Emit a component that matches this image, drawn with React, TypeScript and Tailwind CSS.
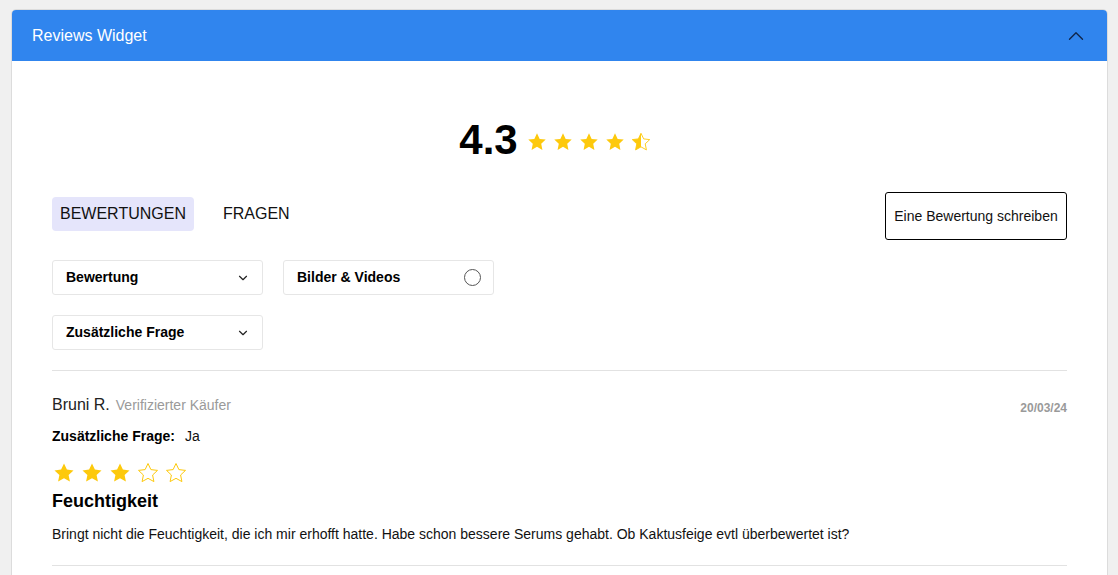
import { ChevronDown, ChevronUp } from "lucide-react";

const STAR =
  "M12 2.5l2.9 6.1 6.6.8-4.9 4.6 1.3 6.6L12 17.3l-5.9 3.3 1.3-6.6-4.9-4.6 6.6-.8z";

function Star({ fill, size }: { fill: "full" | "half" | "empty"; size: number }) {
  const id = `half-${size}`;
  return (
    <svg width={size} height={size} viewBox="0 0 24 24">
      {fill === "half" && (
        <defs>
          <linearGradient id={id}>
            <stop offset="50%" stopColor="#fdc90c" />
            <stop offset="50%" stopColor="#ffffff" />
          </linearGradient>
        </defs>
      )}
      <path
        d={STAR}
        fill={fill === "full" ? "#fdc90c" : fill === "half" ? `url(#${id})` : "none"}
        stroke="#fdc90c"
        strokeWidth={fill === "full" ? 0 : 1}
        strokeLinejoin="round"
      />
    </svg>
  );
}

function Select({ label, icon }: { label: string; icon: "chevron" | "radio" }) {
  return (
    <div className="flex h-[35px] w-[211px] items-center justify-between rounded-[3px] border border-[#e6e6e6] bg-white pl-[13px] pr-[12px]">
      <span className="text-[14px] font-bold text-black">{label}</span>
      {icon === "chevron" ? (
        <ChevronDown size={14} strokeWidth={2} className="text-[#222]" />
      ) : (
        <span className="h-[17px] w-[17px] rounded-full border border-[#555]" />
      )}
    </div>
  );
}

export default function App() {
  return (
    <div
      className="h-[575px] overflow-hidden bg-[#f0f0f0] pl-[11px] pr-[10px] pt-[9px]"
      style={{ fontFamily: '"Liberation Sans", Arial, sans-serif' }}
    >
      <div className="h-[600px] rounded-t-[5px] border border-[#dcdcdc] bg-white">
        <div className="flex h-[51px] items-center justify-between rounded-t-[4px] bg-[#3085ee] pl-[20px] pr-[18px]">
          <span className="text-[16px] text-white">Reviews Widget</span>
          <ChevronUp size={26} strokeWidth={1.25} className="text-[#10264a]" />
        </div>

        <div className="px-[40px]">
          <div className="flex items-center justify-center gap-[8px] pr-[8px] pt-[58px]">
            <span className="text-[42px] font-bold leading-none text-black">4.3</span>
            <div className="flex gap-[4px] pt-[4px]">
              <Star fill="full" size={22} />
              <Star fill="full" size={22} />
              <Star fill="full" size={22} />
              <Star fill="full" size={22} />
              <Star fill="half" size={22} />
            </div>
          </div>

          <div className="mt-[31px] flex items-center justify-between">
            <div className="mb-[4px] flex items-center gap-[20px]">
              <span className="rounded-[4px] bg-[#e5e5fb] px-[8px] py-[5px] text-[16px] text-[#111]">
                BEWERTUNGEN
              </span>
              <span className="px-[9px] py-[5px] text-[16px] text-[#111]">FRAGEN</span>
            </div>
            <button className="flex h-[48px] w-[182px] items-center justify-center rounded-[3px] border border-black bg-white text-[14px] text-[#111]">
              Eine Bewertung schreiben
            </button>
          </div>

          <div className="mt-[20px] flex flex-col gap-[20px]">
            <div className="flex gap-[20px]">
              <Select label="Bewertung" icon="chevron" />
              <Select label="Bilder & Videos" icon="radio" />
            </div>
            <Select label="Zusätzliche Frage" icon="chevron" />
          </div>

          <div className="mt-[20px] border-t border-[#e2e2e2]" />

          <div className="pb-[20px] pt-[22px]">
            <div className="flex items-end justify-between">
              <div className="flex items-baseline gap-[6px]">
                <span className="text-[16px] text-[#222]">Bruni R.</span>
                <span className="text-[14px] text-[#9a9a9a]">Verifizierter Käufer</span>
              </div>
              <span className="text-[12px] font-bold text-[#9a9a9a]">20/03/24</span>
            </div>
            <div className="mt-[9px] flex items-baseline gap-[10px] text-[14px]">
              <span className="font-bold text-black">Zusätzliche Frage:</span>
              <span className="text-[#111]">Ja</span>
            </div>
            <div className="mt-[14px] flex gap-[4px]">
              <Star fill="full" size={24} />
              <Star fill="full" size={24} />
              <Star fill="full" size={24} />
              <Star fill="empty" size={24} />
              <Star fill="empty" size={24} />
            </div>
            <div className="mt-[3px] text-[18px] font-bold text-black">Feuchtigkeit</div>
            <p className="mt-[9px] text-[14px] text-[#111]">
              Bringt nicht die Feuchtigkeit, die ich mir erhofft hatte. Habe schon bessere Serums gehabt. Ob Kaktusfeige evtl überbewertet ist?
            </p>
          </div>
          <div className="border-t border-[#e2e2e2]" />
        </div>
      </div>
    </div>
  );
}
